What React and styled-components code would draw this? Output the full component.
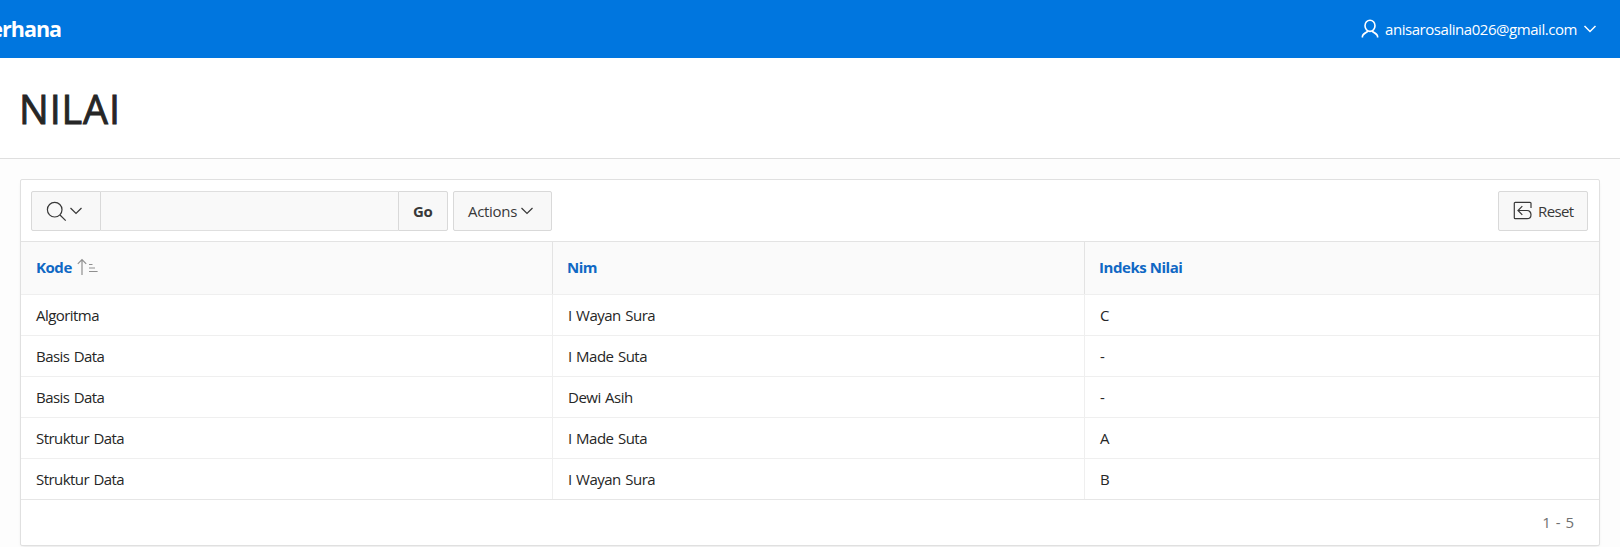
import React from "react";
import styled, { createGlobalStyle } from "styled-components";

const GlobalStyle = createGlobalStyle`
  * { box-sizing: border-box; }
  body {
    margin: 0;
    background: #fdfdfd;
    color: #262626;
    font-family: "Open Sans", "Noto Sans", sans-serif;
    font-size: 15px;
    overflow: hidden;
  }
`;

const Page = styled.div`
  display: flex;
  flex-direction: column;
  height: 547px;
  overflow: hidden;
`;

const TopBar = styled.header`
  display: flex;
  flex: none;
  justify-content: space-between;
  align-items: center;
  height: 58px;
  padding: 0 23px 1px 0;
  background: #0076df;
  color: #fff;
`;

const AppName = styled.div`
  display: flex;
  justify-content: flex-end;
  width: 61px;
  overflow: hidden;
  white-space: nowrap;
  font-size: 21.5px;
  font-weight: 700;
  line-height: 30px;
  letter-spacing: -1px;
`;

const UserMenu = styled.div`
  display: flex;
  align-items: center;
`;

const Email = styled.span`
  margin: 0 6px 0 6px;
  width: 192px;
  font-size: 15px;
  line-height: 20px;
  letter-spacing: -0.45px;
  white-space: nowrap;
`;

const TitleBar = styled.div`
  flex: none;
  height: 101px;
  padding: 24px 21px 0 19px;
  background: #fff;
  border-bottom: 1px solid #dfdfdf;
`;

const Title = styled.h1`
  margin: 0;
  font-size: 39.5px;
  font-weight: 400;
  line-height: 54px;
  letter-spacing: 0.9px;
  -webkit-text-stroke: 0.9px currentColor;
`;

const Card = styled.section`
  display: flex;
  flex: none;
  flex-direction: column;
  width: 1580px;
  height: 367px;
  margin: 20px 0 0 20px;
  background: #fff;
  border: 1px solid #e0e0e0;
  border-radius: 2px;
  box-shadow: 0 2px 4px -2px rgba(0, 0, 0, 0.14);
`;

const Toolbar = styled.div`
  display: flex;
  flex: none;
  height: 61px;
  padding: 11px 11px 0 10px;
`;

const Button = styled.button`
  display: flex;
  align-items: center;
  width: ${(p) => p.$width}px;
  height: 40px;
  padding: 0 0 0 ${(p) => p.$inset}px;
  border: 1px solid #d9d9d9;
  border-radius: ${(p) => p.$radius || "2px"};
  margin-left: ${(p) => p.$gap || 0};
  background: #f8f8f8;
  color: #383838;
  font-family: inherit;
  font-size: 15px;
  font-weight: ${(p) => (p.$bold ? 700 : 400)};
  letter-spacing: ${(p) => p.$tracking || 0}px;
  white-space: nowrap;
`;

const SearchField = styled.input`
  width: 297px;
  height: 40px;
  padding: 0 12px;
  border: solid #dfdfdf;
  border-width: 1px 0;
  border-radius: 0;
  background: #f9f9f9;
  font: inherit;
  outline: none;
`;

const Icon = styled.svg`
  flex: none;
  display: block;
  fill: none;
  stroke: currentColor;
  stroke-width: ${(p) => p.$stroke || 1.2};
  margin-left: ${(p) => p.$gap || 0}px;
  margin-right: ${(p) => p.$after || 0}px;
`;

const Table = styled.table`
  flex: none;
  width: 1578px;
  table-layout: fixed;
  border-collapse: separate;
  border-spacing: 0;
`;

const HeadCell = styled.th`
  height: 53px;
  padding: 0 0 3px ${(p) => (p.$first ? 15 : 14)}px;
  background: #fafafa;
  border-top: 1px solid #e3e3e3;
  border-left: ${(p) => (p.$first ? "0" : "1px solid #e3e3e3")};
  color: #1068c4;
  font-size: 15px;
  font-weight: 700;
  letter-spacing: -0.45px;
  text-align: left;
`;

const HeadLabel = styled.div`
  display: flex;
  align-items: center;
  white-space: nowrap;
`;

const Cell = styled.td`
  height: 41px;
  padding: 0 0 1px 15px;
  border-top: 1px solid #efefef;
  border-left: ${(p) => (p.$first ? "0" : "1px solid #efefef")};
  font-size: 15px;
  letter-spacing: ${(p) => (p.$first ? -0.55 : -0.5)}px;
  word-spacing: 1px;
  white-space: nowrap;
`;

const Footer = styled.div`
  display: flex;
  flex: 1;
  justify-content: flex-end;
  align-items: center;
  padding: 0 25px 2px 0;
  border-top: 1px solid #e6e6e6;
  color: #707070;
  font-size: 15px;
  word-spacing: 1px;
`;

const Chevron = ({ gap, stroke }) => (
  <Icon width="14" height="10" viewBox="0 0 14 10" $gap={gap} $stroke={stroke} aria-hidden="true">
    <path d="M1.5 2l5.5 5.5L12.5 2" />
  </Icon>
);

const rows = [
  ["Algoritma", "I Wayan Sura", "C"],
  ["Basis Data", "I Made Suta", "-"],
  ["Basis Data", "Dewi Asih", "-"],
  ["Struktur Data", "I Made Suta", "A"],
  ["Struktur Data", "I Wayan Sura", "B"],
];

export default function App() {
  return (
    <Page>
      <GlobalStyle />
      <TopBar>
        <AppName>erhana</AppName>
        <UserMenu>
          <Icon width="18" height="20" viewBox="0 0 18 20" $stroke={1.6} aria-hidden="true">
            <ellipse cx="9" cy="6.8" rx="5" ry="5.6" />
            <path d="M1.4 18.5v-1c0-2 1.2-2.8 5.6-5.3M16.6 18.5v-1c0-2-1.2-2.8-5.6-5.3" />
          </Icon>
          <Email>anisarosalina026@gmail.com</Email>
          <Chevron stroke={1.5} />
        </UserMenu>
      </TopBar>
      <TitleBar>
        <Title>NILAI</Title>
      </TitleBar>
      <Card>
        <Toolbar>
          <Button $width={70} $inset={14} $radius="2px 0 0 2px" aria-label="Search columns">
            <Icon width="21" height="21" viewBox="0 0 21 21" aria-hidden="true">
              <circle cx="8.7" cy="8.7" r="7.3" />
              <path d="M14 14l5.7 5.7" />
            </Icon>
            <Chevron gap={2} />
          </Button>
          <SearchField aria-label="Search" />
          <Button $width={50} $inset={14} $bold $tracking={-0.4} $radius="0 2px 2px 0">Go</Button>
          <Button $width={99} $inset={14} $gap="5px" $tracking={-0.3}>
            Actions
            <Chevron gap={3} />
          </Button>
          <Button $width={90} $inset={14} $gap="auto" $tracking={-0.6}>
            <Icon width="20" height="20" viewBox="0 0 20 20" $after={5} aria-hidden="true">
              <path d="M18 7V2.3a1 1 0 0 0-1-1H2.3a1 1 0 0 0-1 1v14.4a1 1 0 0 0 1 1H14c2.6 0 4-1.7 4-4s-1.6-4.2-4-4.2H5M9.3 5.2L5 9.5l4.3 4.3" />
            </Icon>
            Reset
          </Button>
        </Toolbar>
        <Table>
          <colgroup>
            <col width="531" />
            <col width="532" />
            <col />
          </colgroup>
          <thead>
            <tr>
              <HeadCell $first>
                <HeadLabel>
                  Kode
                  <Icon width="21" height="18" viewBox="0 0 21 18" $gap={5} color="#8f8f8f" aria-hidden="true">
                    <path d="M5 17V1.5M.8 5.8L5 1.5l4.2 4.3M12 6.5h3.5M12 10h6M12 13.5h8.6" />
                  </Icon>
                </HeadLabel>
              </HeadCell>
              <HeadCell>Nim</HeadCell>
              <HeadCell>Indeks Nilai</HeadCell>
            </tr>
          </thead>
          <tbody>
            {rows.map((row, i) => (
              <tr key={i}>
                {row.map((value, j) => (
                  <Cell key={j} $first={j === 0}>{value}</Cell>
                ))}
              </tr>
            ))}
          </tbody>
        </Table>
        <Footer>1 - 5</Footer>
      </Card>
    </Page>
  );
}
